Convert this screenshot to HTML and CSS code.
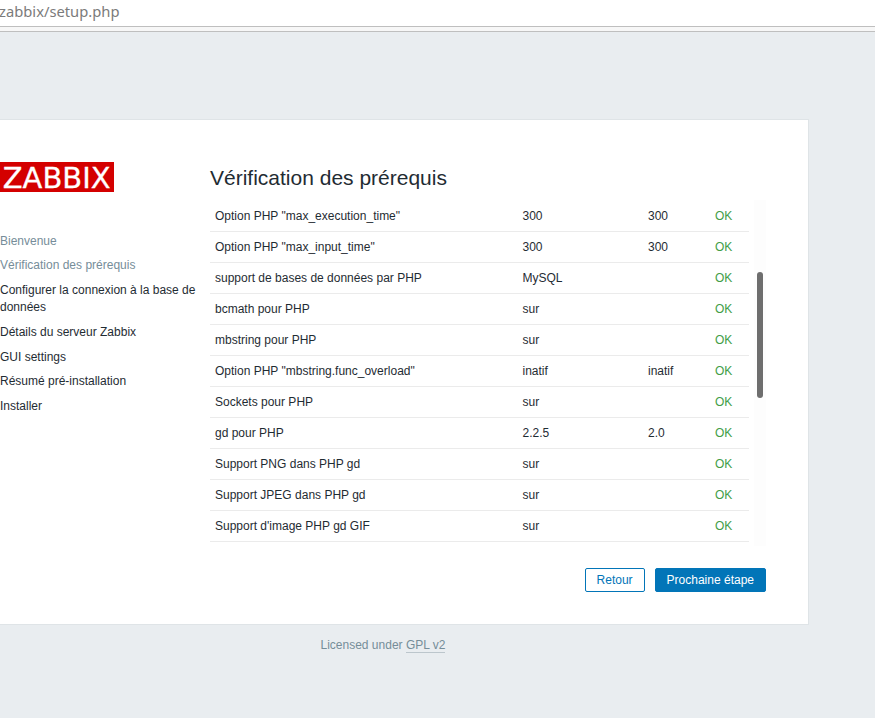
FILE: index.html
```
<!DOCTYPE html>
<html lang="fr">
<head>
<meta charset="utf-8">
<title>Zabbix - Installation</title>
<link rel="stylesheet" href="styles.css">
</head>
<body>
<div class="address-bar"><svg width="130" height="26"><text class="url" x="-1" y="17" textLength="120.5" lengthAdjust="spacingAndGlyphs">zabbix/setup.php</text></svg></div>
<div class="toolbar-edge"></div>
<main class="setup">
  <aside class="steps">
    <svg class="logo" width="114" height="30" role="img" aria-label="Zabbix"><text class="logo-text" x="2.8" y="25.6" textLength="107.7" lengthAdjust="spacingAndGlyphs">ZABBIX</text></svg>
    <ul class="step-list">
      <li class="done">Bienvenue</li>
      <li class="done">Vérification des prérequis</li>
      <li>Configurer la connexion à la base de données</li>
      <li>Détails du serveur Zabbix</li>
      <li>GUI settings</li>
      <li>Résumé pré-installation</li>
      <li>Installer</li>
    </ul>
  </aside>
  <section class="content">
    <h1>Vérification des prérequis</h1>
    <div class="scroll-area">
      <div class="table">
        <div class="row"><span>Option PHP "max_execution_time"</span><span>300</span><span>300</span><span class="ok">OK</span></div>
        <div class="row"><span>Option PHP "max_input_time"</span><span>300</span><span>300</span><span class="ok">OK</span></div>
        <div class="row"><span>support de bases de données par PHP</span><span>MySQL</span><span></span><span class="ok">OK</span></div>
        <div class="row"><span>bcmath pour PHP</span><span>sur</span><span></span><span class="ok">OK</span></div>
        <div class="row"><span>mbstring pour PHP</span><span>sur</span><span></span><span class="ok">OK</span></div>
        <div class="row"><span>Option PHP "mbstring.func_overload"</span><span>inatif</span><span>inatif</span><span class="ok">OK</span></div>
        <div class="row"><span>Sockets pour PHP</span><span>sur</span><span></span><span class="ok">OK</span></div>
        <div class="row"><span>gd pour PHP</span><span>2.2.5</span><span>2.0</span><span class="ok">OK</span></div>
        <div class="row"><span>Support PNG dans PHP gd</span><span>sur</span><span></span><span class="ok">OK</span></div>
        <div class="row"><span>Support JPEG dans PHP gd</span><span>sur</span><span></span><span class="ok">OK</span></div>
        <div class="row"><span>Support d'image PHP gd GIF</span><span>sur</span><span></span><span class="ok">OK</span></div>
      </div>
      <div class="track"><div class="thumb"></div></div>
    </div>
    <div class="actions">
      <button class="btn btn-alt" type="button">Retour</button>
      <button class="btn" type="button">Prochaine étape</button>
    </div>
  </section>
</main>
<footer>Licensed under <a>GPL v2</a></footer>
</body>
</html>
```
FILE: styles.css
```
* { box-sizing: border-box; }
body {
  margin: 0;
  height: 718px;
  overflow: hidden;
  background: #e9edf0;
  color: #1f2c33;
  font: 12px/18px "Liberation Sans", Arial, sans-serif;
}
.address-bar { height: 27px; background: #fff; border-bottom: 1px solid #bfbfbf; }
.address-bar svg, .logo { display: block; }
.url { font: 15px "Noto Sans", sans-serif; fill: #7b7b7b; }
.toolbar-edge { height: 5px; background: #f7f7f7; border-bottom: 1px solid #bfbfbf; }
.setup {
  display: flex;
  width: 809px;
  height: 506px;
  margin-top: 87px;
  padding-top: 42px;
  background: #fff;
  border: 1px solid #dfe4e7;
  border-left: 0;
}
.steps { width: 210px; }
.logo { background: #d40000; overflow: visible; }
.logo-text { font: 29px "DejaVu Sans", sans-serif; fill: #fff; stroke: #fff; stroke-width: 0.3px; }
.step-list { list-style: none; margin: 40.7px 0 0; padding: 0; }
.step-list li { width: 200px; margin-bottom: 7.25px; line-height: 17.4px; }
.step-list .done { color: #768d99; }
.content { width: 556px; }
h1 { margin: 3px 0 10px; font-size: 21px; line-height: 25px; font-weight: 400; }
.scroll-area { display: flex; justify-content: space-between; height: 346px; }
.table { width: 539px; padding-top: 1px; }
.row {
  display: grid;
  grid-template-columns: 307.5px 125.5px 67px 1fr;
  height: 31px;
  padding-left: 5px;
  line-height: 30px;
  border-bottom: 1px solid #ebebeb;
}
.table .ok { color: #429e47; }
.track { width: 12px; padding: 72px 3px 0; background: #fdfdfd; }
.thumb { width: 6px; height: 126px; border-radius: 3px; background: #6e6e6e; }
.actions { display: flex; justify-content: flex-end; gap: 10px; margin-top: 22px; }
.btn {
  height: 24px;
  padding: 0 11px;
  border: 1px solid #0275b8;
  border-radius: 2px;
  background: #0275b8;
  color: #fff;
  font: inherit;
  line-height: 22px;
}
.btn-alt { background: #fff; color: #0275b8; }
footer { width: 766px; margin-top: 11px; text-align: center; color: #768d99; line-height: 18px; }
footer a { display: inline-block; line-height: 14px; border-bottom: 1px solid #bcc6cc; }
```
